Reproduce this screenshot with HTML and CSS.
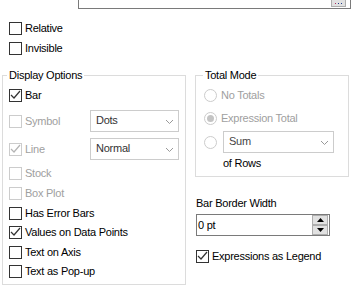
FILE: index.html
```html
<!DOCTYPE html>
<html lang="en">
  <head>
    <meta charset="UTF-8" />
    <title>Chart Properties - Presentation</title>
    <link rel="stylesheet" href="styles.css">
  </head>
  <body>
    <div class="path-box">
      <span class="dots-btn"><i class="dot"></i><i class="dot"></i><i class="dot"></i></span>
    </div>

    <div class="top-checks">
      <div class="check"><span class="box"></span><span>Relative</span></div>
      <div class="check"><span class="box"></span><span>Invisible</span></div>
    </div>

    <div class="groups">
      <fieldset class="group display-group">
        <legend>Display Options</legend>
        <div class="check">
          <span class="box"><svg width="11" height="11" viewBox="0 0 11 11"><polyline points="1,5 4,8 10,1" fill="none" stroke="#333" stroke-width="1.2"/></svg></span>
          <span>Bar</span>
        </div>
        <div class="check combo-row disabled">
          <span class="box"></span>
          <span class="label">Symbol</span>
          <div class="combo">Dots<svg class="chev" width="7" height="4" viewBox="0 0 7 4"><polyline points="0,0 3.5,3.5 7,0" fill="none" stroke="#999" stroke-width="1"/></svg></div>
        </div>
        <div class="check combo-row disabled">
          <span class="box"><svg width="11" height="11" viewBox="0 0 11 11"><polyline points="1,5 4,8 10,1" fill="none" stroke="#b4b4b4" stroke-width="1.2"/></svg></span>
          <span class="label">Line</span>
          <div class="combo">Normal<svg class="chev" width="7" height="4" viewBox="0 0 7 4"><polyline points="0,0 3.5,3.5 7,0" fill="none" stroke="#999" stroke-width="1"/></svg></div>
        </div>
        <div class="check disabled spaced"><span class="box"></span><span>Stock</span></div>
        <div class="check disabled"><span class="box"></span><span>Box Plot</span></div>
        <div class="check short"><span class="box"></span><span>Has Error Bars</span></div>
        <div class="check">
          <span class="box"><svg width="11" height="11" viewBox="0 0 11 11"><polyline points="1,5 4,8 10,1" fill="none" stroke="#333" stroke-width="1.2"/></svg></span>
          <span>Values on Data Points</span>
        </div>
        <div class="check short"><span class="box"></span><span>Text on Axis</span></div>
        <div class="check"><span class="box"></span><span>Text as Pop-up</span></div>
      </fieldset>

      <div class="right-col">
        <fieldset class="group total-group">
          <legend>Total Mode</legend>
          <div class="radio-row disabled"><span class="radio"></span><span>No Totals</span></div>
          <div class="radio-row disabled"><span class="radio selected"></span><span>Expression Total</span></div>
          <div class="radio-row sum-row disabled">
            <span class="radio"></span>
            <div class="combo sum-combo">Sum<svg class="chev" width="7" height="4" viewBox="0 0 7 4"><polyline points="0,0 3.5,3.5 7,0" fill="none" stroke="#999" stroke-width="1"/></svg></div>
          </div>
          <div class="of-rows">of Rows</div>
        </fieldset>

        <div class="field-label">Bar Border Width</div>
        <div class="spin">
          <span>0 pt</span>
          <div class="spin-btns">
            <span class="spin-btn"><svg width="7" height="4" viewBox="0 0 7 4"><polygon points="0,4 3.5,0 7,4" fill="#000"/></svg></span>
            <span class="spin-btn"><svg width="7" height="4" viewBox="0 0 7 4"><polygon points="0,0 3.5,4 7,0" fill="#000"/></svg></span>
          </div>
        </div>

        <div class="check legend-check">
          <span class="box"><svg width="11" height="11" viewBox="0 0 11 11"><polyline points="1,5 4,8 10,1" fill="none" stroke="#333" stroke-width="1.2"/></svg></span>
          <span>Expressions as Legend</span>
        </div>
      </div>
    </div>
  </body>
</html>
```

FILE: styles.css
```css
* {
  margin: 0;
  padding: 0;
  box-sizing: border-box;
}

body {
  background: #fff;
  color: #000;
  font-family: "Liberation Sans", Arial, sans-serif;
  font-size: 11px;
  letter-spacing: -0.25px;
  line-height: 13px;
  width: 355px;
  height: 293px;
  overflow: hidden;
}

.path-box {
  margin-left: 78px;
  width: 273px;
  height: 9px;
  border: 1px solid #7a7a7a;
  border-top: none;
  display: flex;
  justify-content: flex-end;
  align-items: flex-end;
  padding: 0 4px 1px 0;
}

.dots-btn {
  width: 15px;
  height: 7px;
  background: #e1e1e1;
  border: 1px solid #adadad;
  border-top: none;
  display: flex;
  justify-content: center;
  align-items: flex-end;
  gap: 2px;
  padding-bottom: 2px;
}

.dot {
  width: 1px;
  height: 1px;
  background: #1d3a8a;
}

.dot:first-child {
  background: #b03060;
}

.top-checks {
  margin-top: 10px;
  padding-left: 9px;
}

.check {
  display: flex;
  align-items: flex-start;
  gap: 3px;
  height: 20px;
  padding-top: 3px;
}

.check.short {
  height: 19px;
}

.box {
  width: 13px;
  height: 13px;
  border: 1px solid #333;
  background: #fff;
  flex: none;
  display: flex;
  align-items: center;
  justify-content: center;
}

.disabled {
  color: #a0a0a0;
}

.disabled .box {
  border-color: #cccccc;
}

.groups {
  display: grid;
  grid-template-columns: 184px 154px;
  column-gap: 9px;
  align-items: start;
  padding-left: 2px;
  margin-top: 9px;
}

.group {
  border: 1px solid #dcdcdc;
  min-width: 0;
}

.group legend {
  line-height: 14px;
  padding: 0 2px;
}

.display-group {
  padding: 4px 6px 2px 6px;
}

.display-group legend {
  margin-left: -2px;
}

.combo-row {
  align-items: center;
  height: 26px;
  padding-top: 0;
  margin-top: 2px;
}

.combo-row .label {
  flex: 1;
}

.combo {
  position: relative;
  width: 89px;
  height: 22px;
  border: 1px solid #cccccc;
  color: #333;
  padding-left: 5px;
  line-height: 19px;
}

.chev {
  position: absolute;
  right: 5px;
  top: 9px;
}

.spaced {
  margin-top: 2px;
}

.total-group {
  padding: 2px 8px 6px 8px;
}

.total-group legend {
  margin-left: -1px;
}

.radio-row {
  display: flex;
  align-items: center;
  gap: 4px;
  height: 23px;
}

.radio-row.sum-row {
  height: 24px;
}

.radio {
  width: 13px;
  height: 13px;
  border-radius: 50%;
  border: 1px solid #cccccc;
  background: #fff;
  flex: none;
  display: flex;
  align-items: center;
  justify-content: center;
}

.radio.selected::after {
  content: "";
  width: 7px;
  height: 7px;
  border-radius: 50%;
  background: #c4c4c4;
}

.sum-combo {
  width: 111px;
  margin-left: 2px;
  color: #444;
}

.of-rows {
  margin: 3px 0 0 19px;
  color: #000;
}

.field-label {
  margin: 20px 0 0 1px;
}

.spin {
  margin: 4px 0 0 1px;
  width: 134px;
  height: 22px;
  border: 1px solid #7a7a7a;
  display: flex;
  align-items: center;
  justify-content: space-between;
  padding: 0 1px;
}

.spin-btns {
  display: flex;
  flex-direction: column;
}

.spin-btn {
  width: 16px;
  height: 10px;
  background: #e1e1e1;
  border: 1px solid #adadad;
  display: flex;
  align-items: center;
  justify-content: center;
}

.legend-check {
  margin: 11px 0 0 1px;
}
```
